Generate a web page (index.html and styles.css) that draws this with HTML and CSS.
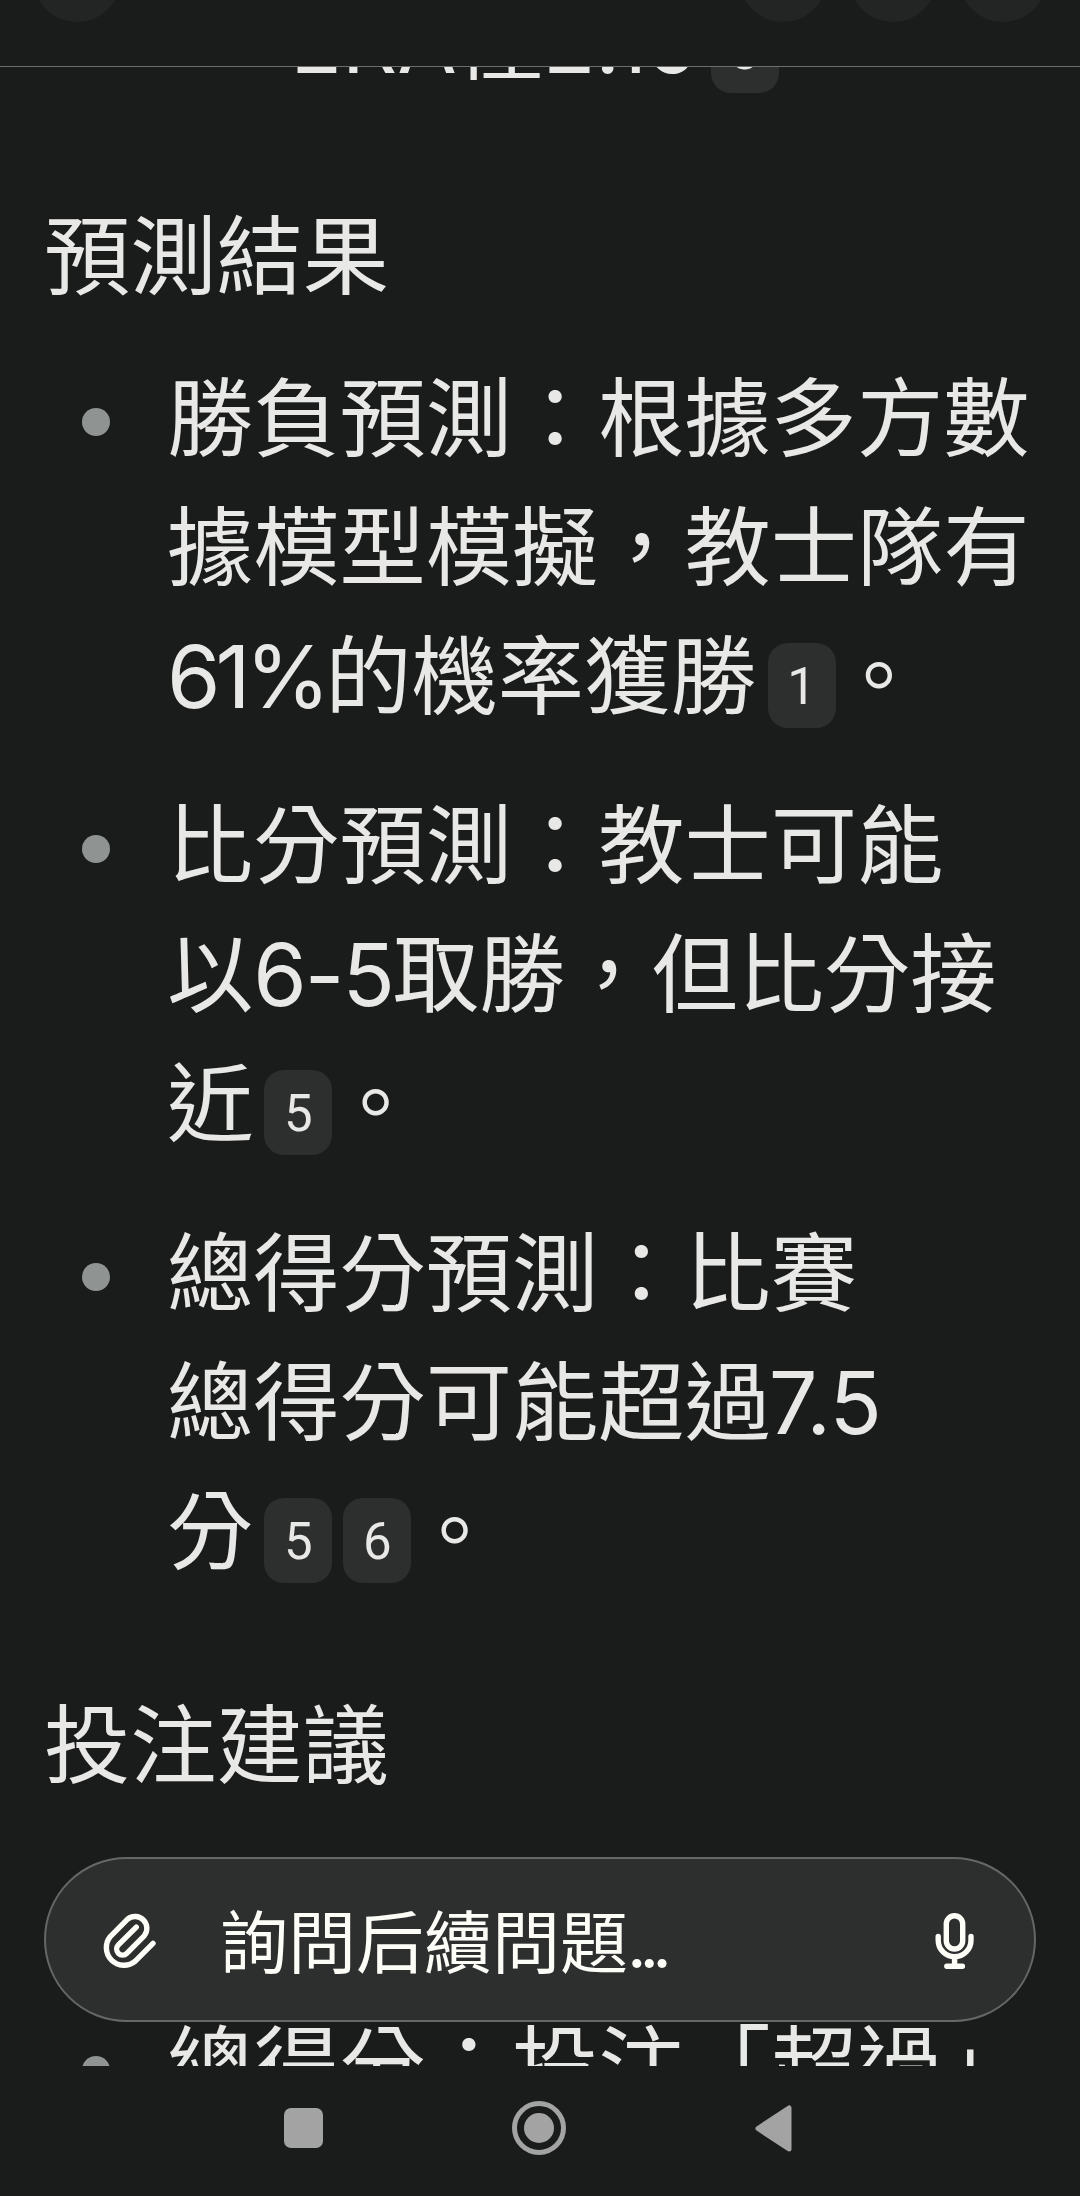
FILE: index.html
```html
<!DOCTYPE html>
<html lang="zh-Hant">

<head>
    <meta charset="UTF-8">
    <meta name="viewport" content="width=device-width, initial-scale=1.0">
    <title>預測結果</title>
    <link rel="stylesheet" href="styles.css">
</head>

<body>
    <div class="screen">
        <header class="topbar">
            <span class="round-btn"></span>
            <div class="topbar-actions">
                <span class="round-btn"></span>
                <span class="round-btn"></span>
                <span class="round-btn"></span>
            </div>
        </header>

        <main class="answer">
            <p class="prev-line">ERA僅<span class="era-num">2.19</span><span class="cite">3</span></p>

            <h2>預測結果</h2>
            <ul>
                <li><p>勝負預測：根據多方數<br>據模型模擬，教士隊有<br><span class="percent">61%</span>的機率獲勝<span class="cite">1</span>。</p></li>
                <li><p>比分預測：教士可能<br>以<span class="score">6-5</span>取勝，但比分接<br>近<span class="cite">5</span>。</p></li>
                <li><p>總得分預測：比賽<br>總得分可能超過<span class="total">7.5</span><br>分<span class="cite">5</span><span class="cite">6</span>。</p></li>
            </ul>

            <h2>投注建議</h2>
            <ul class="tips">
                <li><p>總得分：投注「超過」</p></li>
            </ul>
        </main>

        <div class="ask-bar">
            <svg class="icon" viewBox="18 31 60 60">
                <path d="M73 63.4 L55.3 81.1 A17.6 17.6 0 0 1 30.5 56.3 L47.6 39.2 A11.8 11.8 0 0 1 64.2 55.8 L46.8 73.3 A5.9 5.9 0 0 1 38.4 64.9 L56.3 47.2" />
            </svg>
            <span class="ask-text">詢問后續問題<span class="dots">...</span></span>
            <svg class="icon" viewBox="25 31 60 60">
                <rect x="46.3" y="35.7" width="16.4" height="33.3" rx="8.2" />
                <path d="M38.2 56.5 V60.3 A16.4 16.4 0 0 0 71 60.3 V56.5 M54.6 77 V86 M46.8 86.3 H62.4" />
            </svg>
        </div>

        <nav class="navbar">
            <span class="nav-square"></span>
            <span class="nav-home"></span>
            <svg class="nav-back" viewBox="0 0 37 47">
                <path d="M3 23.5 L34 3 V44 Z" />
            </svg>
        </nav>
    </div>
</body>

</html>
```
FILE: styles.css
```css
body {
    margin: 0;
    background-color: #1a1c1b;
    color: #e8e8e6;
    font-family: Inter, "Noto Sans CJK TC", sans-serif;
}

.screen {
    position: relative;
    width: 1080px;
    height: 2196px;
    overflow: hidden;
    display: flex;
    flex-direction: column;
}

/* Top bar, scrolled partly out of view */
.topbar {
    flex: none;
    box-sizing: border-box;
    height: 67px;
    padding: 0 33px;
    border-bottom: 1px solid #6b6d6c;
    display: flex;
    justify-content: space-between;
    align-items: flex-start;
}

.topbar-actions {
    display: flex;
    gap: 22px;
}

.round-btn {
    width: 88px;
    height: 88px;
    margin-top: -66px;
    border-radius: 50%;
    background-color: #232524;
}

/* Answer */
.answer {
    flex: 1;
    min-height: 0;
    overflow: hidden;
    padding: 0 44px;
    font-size: 86.25px;
    line-height: 129px;
    white-space: nowrap;
}

p {
    margin: 0;
}

.prev-line {
    margin-top: -90px;
    padding-left: 246px;
}

h2 {
    margin: 85.5px 0 33px;
    font-size: 86.25px;
    font-weight: 400;
}

ul {
    list-style: none;
    margin: 0;
    padding: 0 0 0 38px;
    display: flex;
    flex-direction: column;
    gap: 40.5px;
}

li {
    display: flex;
    align-items: flex-start;
    gap: 57px;
}

li::before {
    content: "";
    flex: none;
    width: 28px;
    height: 28px;
    margin-top: 54px;
    border-radius: 50%;
    background-color: #8f9392;
}

.tips {
    margin-top: 192px;
}

.cite {
    display: inline-block;
    width: 68px;
    height: 85px;
    margin-left: 11px;
    border-radius: 20px;
    background-color: #2d2f2e;
    font-family: Roboto, sans-serif;
    font-size: 51px;
    line-height: 88px;
    text-align: center;
    vertical-align: 4px;
}

.era-num {
    letter-spacing: -0.4px;
}

.percent {
    letter-spacing: -5px;
}

.score {
    letter-spacing: -2px;
}

.total {
    margin-left: -2px;
    letter-spacing: -0.5px;
}

/* Follow-up question */
.ask-bar {
    position: absolute;
    left: 44px;
    top: 1857px;
    box-sizing: border-box;
    width: 992px;
    height: 165px;
    padding: 3px 49px 0 52px;
    border: 2px solid #656766;
    border-radius: 83px;
    background-color: #2d2f2e;
    color: #fdfdf8;
    display: flex;
    align-items: center;
}

.ask-text {
    flex: 1;
    padding: 4px 0 0 62px;
    font-size: 68px;
    line-height: 100px;
}

.dots {
    margin-left: -1px;
    letter-spacing: -7px;
}

.icon {
    width: 60px;
    height: 60px;
    fill: none;
    stroke: #fdfdf8;
    stroke-width: 5.4;
    stroke-linecap: round;
    stroke-linejoin: round;
}

/* System navigation */
.navbar {
    flex: none;
    box-sizing: border-box;
    height: 130px;
    padding: 0 0 6px 284px;
    display: flex;
    align-items: center;
    gap: 189px;
}

.nav-square {
    width: 39px;
    height: 40px;
    border-radius: 7px;
    background-color: #a3a3a3;
}

.nav-home {
    box-sizing: border-box;
    width: 54px;
    height: 54px;
    padding: 7px;
    border: 5px solid #a3a3a3;
    border-radius: 50%;
    background-color: #a3a3a3;
    background-clip: content-box;
}

.nav-back {
    width: 37px;
    height: 47px;
    fill: #a3a3a3;
    stroke: #a3a3a3;
    stroke-width: 5;
    stroke-linejoin: round;
}
```
